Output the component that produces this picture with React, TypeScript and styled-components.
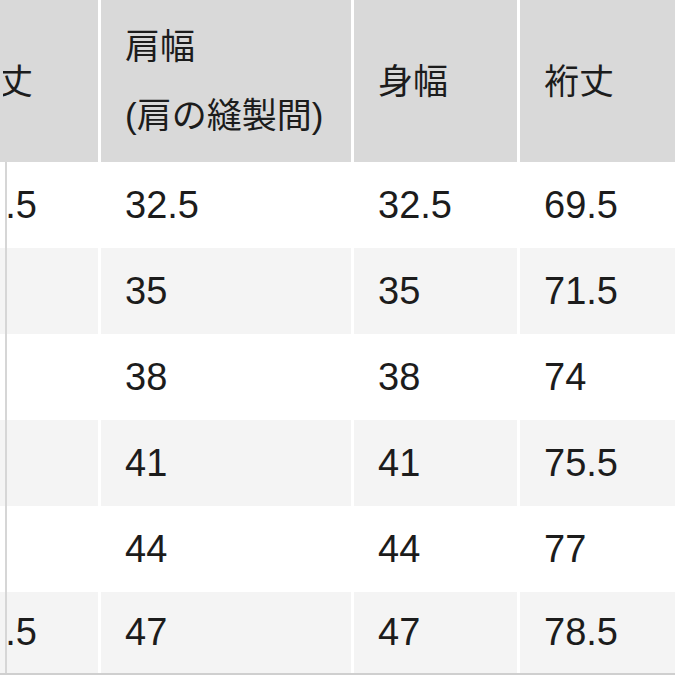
import styled, { createGlobalStyle } from "styled-components";

const GlobalStyle = createGlobalStyle`
    html, body {
        margin: 0;
        padding: 0;
        background: #ffffff;
    }
    body {
        font-family: "Liberation Sans", "Noto Sans CJK JP", sans-serif;
        color: #1c1c1c;
    }
`;

const Viewport = styled.div`
    width: 675px;
    height: 675px;
    overflow: hidden;
    background: #ffffff;
`;

const Table = styled.div`
    margin-left: -61px;
    width: 800px;
    display: flex;
    flex-direction: column;
`;

const columns = "159px 250px 163px 200px";

const HeaderRow = styled.div`
    display: grid;
    grid-template-columns: ${columns};
    column-gap: 3px;
    height: 162px;
    background: #ffffff;
`;

const HeaderCell = styled.div`
    display: flex;
    align-items: center;
    padding-left: 24px;
    background: #d9d9d9;
    font-family: "Liberation Sans", "Noto Sans CJK JP", sans-serif;
    font-size: 35px;
    line-height: 69px;
    white-space: nowrap;
`;

const Clipped = styled.div<{ $from: number }>`
    clip-path: inset(0 0 0 ${(p) => p.$from}px);
`;

const Body = styled.div`
    position: relative;
    display: flex;
    flex-direction: column;
    border-bottom: 2px solid #cfcfcf;

    &::before {
        content: "";
        position: absolute;
        left: 66px;
        top: 0;
        bottom: 0;
        width: 2px;
        background: #d6d6d6;
        z-index: 1;
    }
`;

const BodyRow = styled.div<{ $height: number }>`
    display: grid;
    grid-template-columns: ${columns};
    column-gap: 3px;
    height: ${(p) => p.$height}px;
    background: #ffffff;
`;

const BodyCell = styled.div<{ $shade: boolean }>`
    display: flex;
    align-items: center;
    padding-left: 24px;
    background: ${(p) => (p.$shade ? "#f4f4f4" : "#ffffff")};
    font-size: 38px;
    white-space: nowrap;
`;

const headers = ["着丈", "肩幅\n(肩の縫製間)", "身幅", "裄丈"];

const rows = [
    ["65.5", "32.5", "32.5", "69.5"],
    ["67", "35", "35", "71.5"],
    ["69", "38", "38", "74"],
    ["71", "41", "41", "75.5"],
    ["73", "44", "44", "77"],
    ["74.5", "47", "47", "78.5"],
];

export default function App() {
    return (
        <Viewport>
            <GlobalStyle />
            <Table>
                <HeaderRow>
                    {headers.map((h, j) => (
                        <HeaderCell key={h}>
                            <Clipped $from={j === 0 ? 40 : 0}>
                                {h.split("\n").map((line) => (
                                    <div key={line}>{line}</div>
                                ))}
                            </Clipped>
                        </HeaderCell>
                    ))}
                </HeaderRow>
                <Body>
                    {rows.map((row, i) => {
                        const shade = i % 2 === 1;
                        return (
                            <BodyRow
                                key={i}
                                $height={i === rows.length - 1 ? 81 : 86}
                            >
                                {row.map((v, j) => (
                                    <BodyCell key={j} $shade={shade}>
                                        <Clipped $from={j === 0 ? 44 : 0}>
                                            {v}
                                        </Clipped>
                                    </BodyCell>
                                ))}
                            </BodyRow>
                        );
                    })}
                </Body>
            </Table>
        </Viewport>
    );
}
